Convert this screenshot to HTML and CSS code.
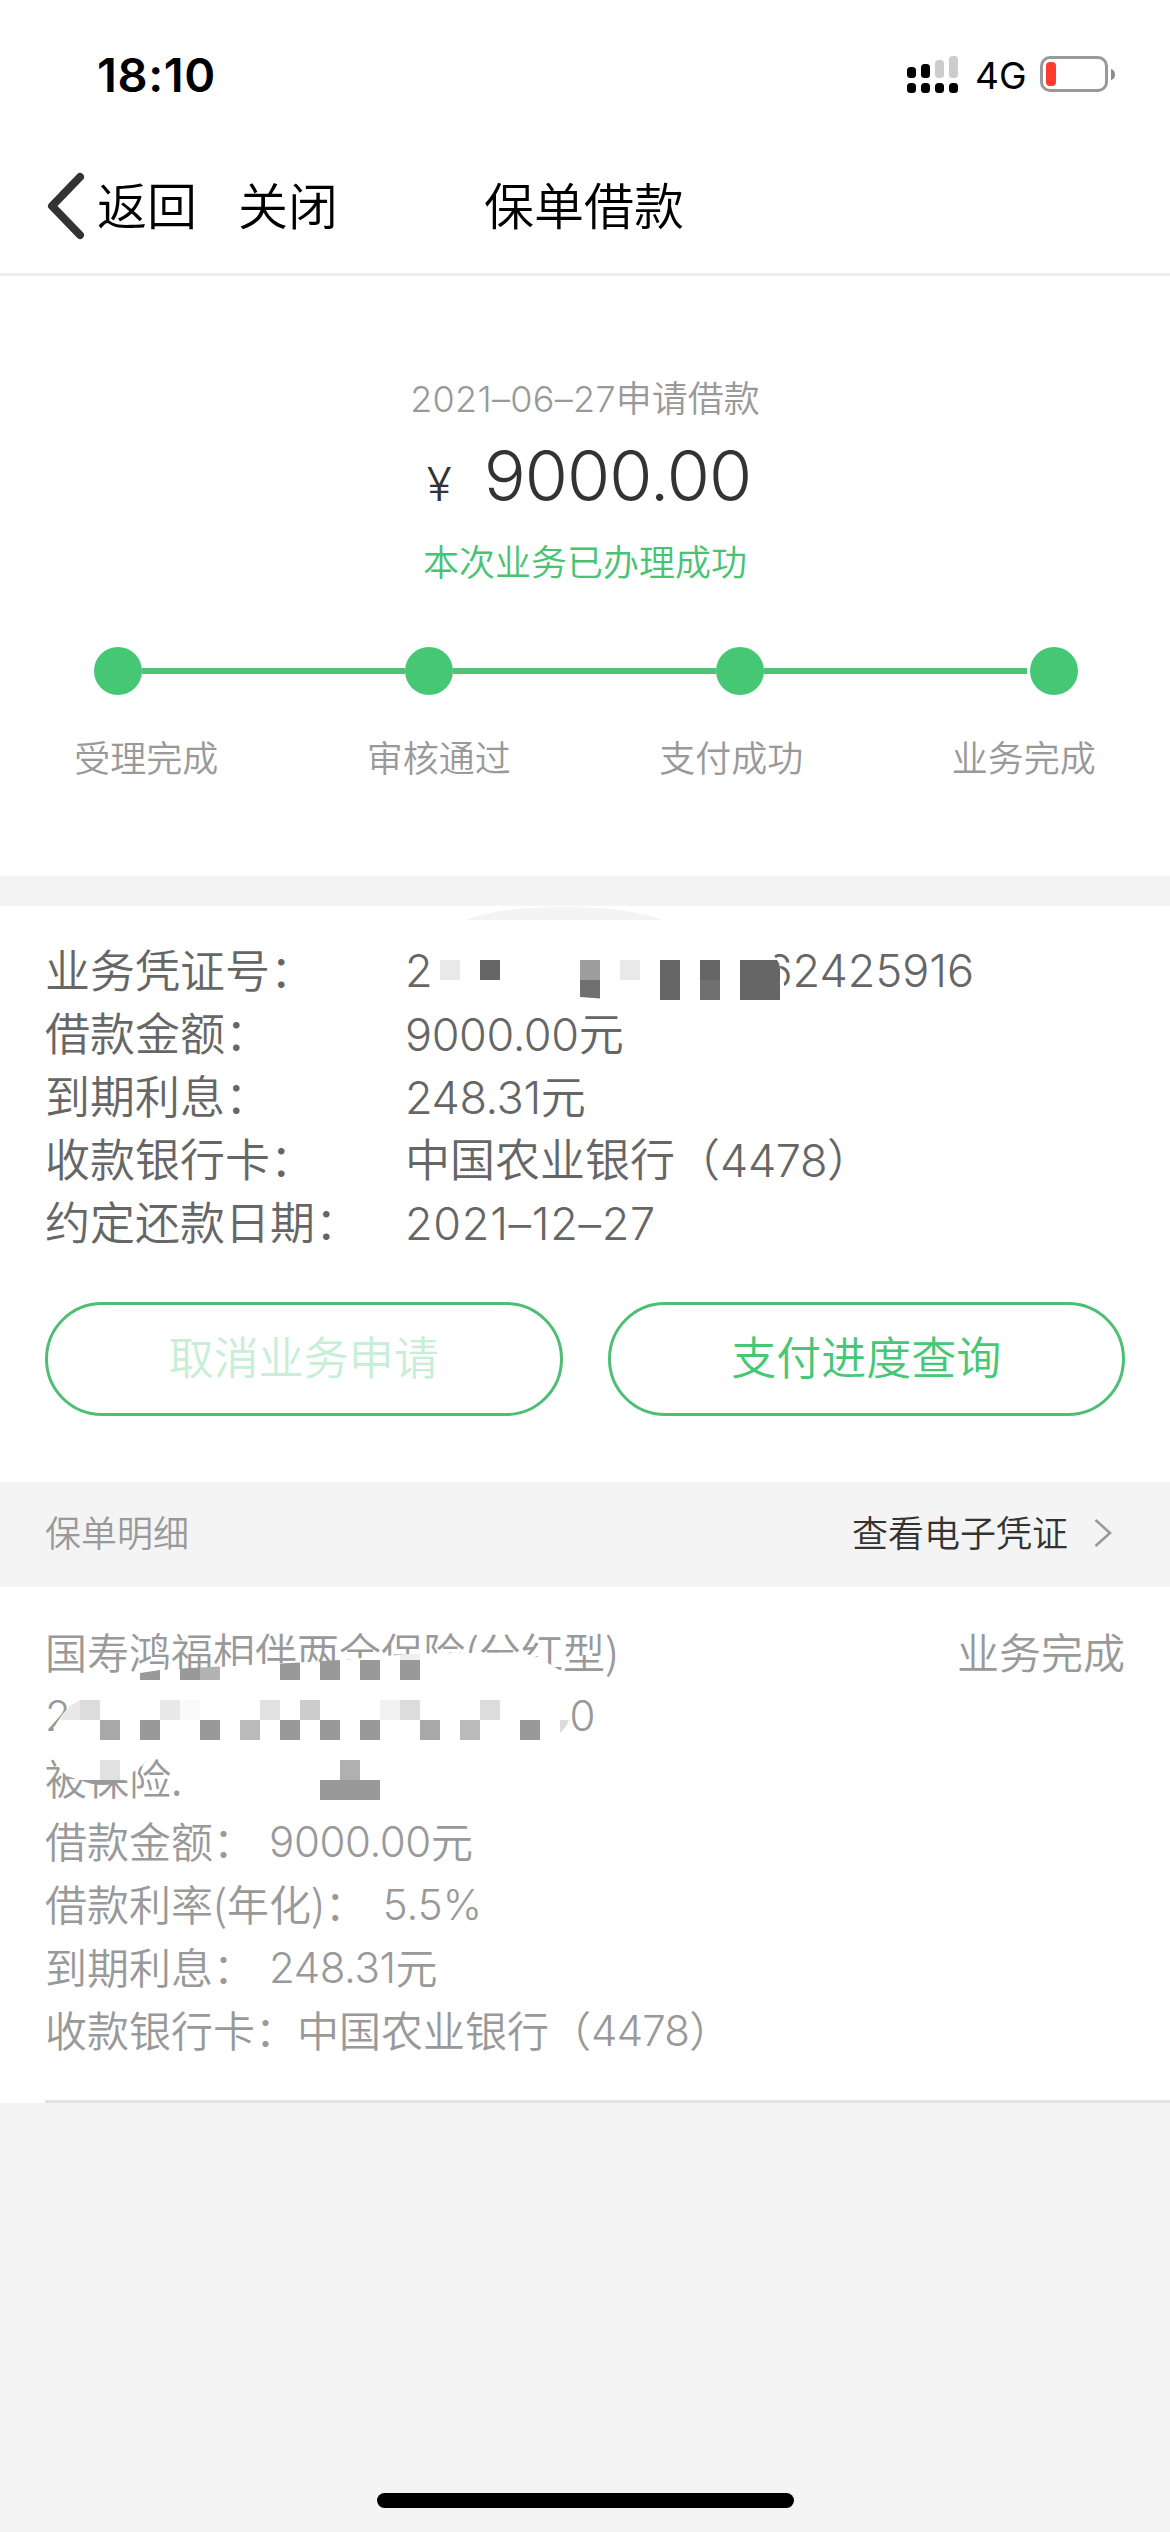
FILE: index.html
```html
<!DOCTYPE html>
<html lang="zh-CN">
<head>
<meta charset="utf-8">
<title>保单借款</title>
<link rel="stylesheet" href="styles.css">
</head>
<body>
<header class="status-bar">
  <span class="time">18:10</span>
  <div class="indicators">
    <svg class="signal" width="52" height="38" viewBox="0 0 52 38">
      <g fill="#000"><rect x="0" y="11" width="9" height="11" rx="3.5"/><rect x="14" y="8" width="9" height="14" rx="3.5"/>
      <rect x="0" y="27" width="9" height="10" rx="3.5"/><rect x="14" y="27" width="9" height="10" rx="3.5"/><rect x="28" y="27" width="9" height="10" rx="3.5"/><rect x="42" y="27" width="9" height="10" rx="3.5"/></g>
      <g fill="#ccc"><rect x="28" y="4" width="9" height="18" rx="3.5"/><rect x="42" y="0" width="9" height="22" rx="3.5"/></g>
    </svg>
    <span class="network">4G</span>
    <svg class="battery" width="76" height="36" viewBox="0 0 76 36">
      <rect x="1.5" y="1.5" width="65" height="33" rx="8.5" fill="none" stroke="#999" stroke-width="3"/>
      <rect x="6" y="6" width="10" height="24" rx="4" fill="#ff3b30"/>
      <path d="M71 13Q75 14 75 18.500Q75 23 71 24Z" fill="#8c8c8c"/>
    </svg>
  </div>
</header>
<nav class="nav-bar">
  <svg class="back-icon" width="38" height="68" viewBox="0 0 38 68"><path d="M33 5L5 34L33 63" fill="none" stroke="#333" stroke-width="8" stroke-linecap="round" stroke-linejoin="round"/></svg>
  <span>返回</span>
  <span class="close">关闭</span>
  <h1>保单借款</h1>
</nav>
<section class="summary">
  <p class="date"><span class="num">2021–06–27</span>申请借款</p>
  <p class="amount"><span class="yen">¥</span><span class="num">9000.00</span></p>
  <p class="result">本次业务已办理成功</p>
  <div class="steps">
    <i class="dot"></i><i class="bar"></i><i class="dot"></i><i class="bar"></i><i class="dot"></i><i class="bar last"></i><i class="dot"></i>
  </div>
  <div class="labels"><span>受理完成</span><span>审核通过</span><span>支付成功</span><span>业务完成</span></div>
</section>
<section class="details">
  <svg class="pull-arc" width="198" height="14" viewBox="0 0 198 14"><path d="M0 14Q28 5 50 3Q99-1 148 3Q175 6 198 14Z" fill="#f4f4f4"/></svg>
  <dl>
    <dt>业务凭证号：</dt><dd class="num voucher"><span>2</span><span>62425916</span></dd>
    <dt>借款金额：</dt><dd><span class="num">9000.00</span>元</dd>
    <dt>到期利息：</dt><dd><span class="num">248.31</span>元</dd>
    <dt>收款银行卡：</dt><dd>中国农业银行（<span class="num">4478</span>）</dd>
    <dt>约定还款日期：</dt><dd><span class="num due">2021–12–27</span></dd>
  </dl>
  <svg class="mask voucher-mask" width="350" height="50" viewBox="435 955 350 50">
    <path d="M435 955H774Q785 972 784 990V1005H435Z" fill="#fff"/>
    <path d="M440 960h20v20h-20zM620 960h20v20h-20z" fill="#e9e9e9"/>
    <path d="M480 960h20v20h-20zM660 960h20v40h-20zM700 960h20v20h-20zM740 960h37Q780 964 780 968V1000H740z" fill="#666"/>
    <path d="M580 960h20v20h-20z" fill="#9e9e9e"/>
    <path d="M580 980h20v18.500l-20-1.500zM700 980h20v20h-20z" fill="#707070"/>
  </svg>
  <div class="actions"><button class="disabled">取消业务申请</button><button>支付进度查询</button></div>
</section>
<div class="section-head">
  <span>保单明细</span>
  <a>查看电子凭证<svg width="20" height="32" viewBox="0 0 20 32"><path d="M1.500 3L16 16L1.500 29" fill="none" stroke="#999" stroke-width="2.500"/></svg></a>
</div>
<section class="policy">
  <div class="row"><span>国寿鸿福相伴两全保险(分红型)</span><span>业务完成</span></div>
  <div class="row number"><span class="num">2</span><span class="num">0</span></div>
  <div class="row">被保险.</div>
  <div class="row">借款金额：<span class="num gap">9000.00</span>元</div>
  <div class="row">借款利率(年化)：<span class="num gap rate">5.5%</span></div>
  <div class="row">到期利息：<span class="num gap">248.31</span>元</div>
  <div class="row">收款银行卡：中国农业银行（<span class="num card">4478</span>）</div>
  <svg class="mask policy-mask" width="560" height="190" viewBox="40 1630 560 190">
    <g fill="#fff">
      <path d="M140 1673L160 1670L220 1667L280 1663L335 1661L370 1657L420 1653.500L465 1653L520 1652.500L538 1657L548 1663L561 1671V1690H140Z"/>
      <path d="M80 1698L70 1706L62 1715L56 1724L52 1734V1738H566L569 1722L570 1706L574 1698Z"/>
      <path d="M55 1755L58 1766Q64 1776 73 1778L80 1780H126L132 1773L143 1765L148 1755Z"/>
    </g>
    <path d="M140 1673L160 1670V1680H140ZM180 1668.500L200 1667.500V1680H180ZM280 1663.500L300 1662.500V1680H280ZM320 1661L340 1660V1680H320ZM360 1660h20v20h-20zM400 1660h20v20h-20z" fill="#999"/>
    <path d="M200 1667.500L220 1666.500V1680H200Z" fill="#b3b3b3"/>
    <path d="M400 1655L420 1653.500V1660H400Z" fill="#eee"/>
    <path d="M80 1700L70 1706L60 1718V1720H80ZM160 1700h20v20h-20z" fill="#e8e8e8"/>
    <path d="M80 1700h20v20h-20zM400 1700h20v20h-20zM480 1700h20v20h-20zM560 1720h9q-3 8-9 13z" fill="#dcdcdc"/>
    <path d="M180 1700h20v20h-20z" fill="#fafafa"/>
    <path d="M260 1700h20v20h-20zM100 1760h20v20h-20z" fill="#e1e1e1"/>
    <path d="M300 1700h20v20h-20z" fill="#ccc"/>
    <path d="M380 1700h20v20h-20z" fill="#f1f1f1"/>
    <path d="M100 1720h20v20h-20zM420 1720h20v20h-20z" fill="#a8a8a8"/>
    <path d="M140 1720h20v20h-20zM200 1720h20v20h-20zM280 1720h20v20h-20zM320 1720h20v20h-20zM360 1720h20v20h-20zM520 1720h20v20h-20zM320 1780h60v20h-60z" fill="#999"/>
    <path d="M240 1720h20v20h-20zM460 1720h20v20h-20z" fill="#bababa"/>
    <path d="M340 1760h20v20h-20z" fill="#b0b0b0"/>
    <path d="M80 1780H126Q102 1790 80 1780Z" fill="#999"/>
  </svg>
</section>
<footer><div class="home-indicator"></div></footer>
</body>
</html>
```
FILE: styles.css
```css
* { box-sizing: border-box; }
body { margin: 0; width: 1170px; height: 2532px; display: flex; flex-direction: column; background: #f4f4f4; color: #999; font: 350 36px/1.4 "Noto Sans CJK SC", sans-serif; }
p, h1, dl, dd { margin: 0; font-weight: inherit; }
.num { font-family: Inter, sans-serif; font-weight: 300; letter-spacing: -.4px; }
.status-bar { height: 132px; background: #fff; color: #000; display: flex; justify-content: space-between; padding: 0 54px 0 97px; font-family: Inter, sans-serif; }
.time { font-size: 47px; font-weight: 600; line-height: 149px; letter-spacing: .6px; }
.indicators { display: flex; align-items: flex-start; padding-top: 56px; }
.network { font-size: 37px; font-weight: 400; line-height: 40px; width: 50px; margin: 0 15px 0 16px; }
.nav-bar { position: relative; height: 144px; background: #fff; border-bottom: 3px solid #eee; display: flex; align-items: center; padding-left: 47px; color: #000; font-size: 50px; line-height: 70px; }
.back-icon { margin: 6px 12px 0 0; }
.close { margin-left: 41px; }
h1 { font-size: 50px; margin-left: 146px; }
.summary { height: 600px; background: #fff; text-align: center; padding-top: 95px; }
.date { line-height: 50px; }
.date .num { letter-spacing: .3px; }
.amount { color: #333; display: flex; justify-content: center; align-items: baseline; font-size: 70px; line-height: 104px; padding-left: 8px; }
.amount .num { letter-spacing: -1px; }
.yen { font-family: Inter, sans-serif; font-weight: 300; font-size: 46px; margin-right: 32px; }
.result { color: #49c274; line-height: 48px; }
.steps { display: flex; align-items: center; padding: 0 92px 0 94px; height: 48px; margin-top: 63px; }
.dot { width: 48px; height: 48px; border-radius: 50%; background: #46c774; flex: none; }
.bar { height: 6px; flex: 1; background: #4fc278; }
.last { margin-right: 3px; }
.labels { display: grid; grid-template-columns: repeat(4, 1fr); margin-top: 36px; line-height: 50px; }
.details { position: relative; height: 576px; margin-top: 30px; background: #fff; padding: 31px 45px 0; color: #666; font-size: 45px; }
.pull-arc { position: absolute; left: 465px; top: 0; }
dl { display: grid; grid-template-columns: 360px 1fr; grid-auto-rows: 63px; line-height: 63px; white-space: nowrap; }
.voucher { display: flex; justify-content: space-between; width: 569px; padding-top: 2px; letter-spacing: 0; }
.due { letter-spacing: .7px; }
.mask { position: absolute; display: block; }
.voucher-mask { left: 435px; top: 49px; }
.actions { display: grid; grid-template-columns: 1fr 1fr; gap: 45px; margin-top: 50px; }
button { height: 114px; border: 3px solid #4dbf75; border-radius: 57px; background: #fff; color: #46c774; font: inherit; line-height: 60px; padding: 0 0 6px; }
.disabled { color: #c8eed5; }
.section-head { height: 105px; display: flex; justify-content: space-between; align-items: center; padding: 0 56px 6px 45px; }
.section-head a { display: flex; align-items: center; color: #333; gap: 26px; }
.section-head svg { margin-top: 4px; }
.policy { position: relative; height: 516px; background: linear-gradient(#e2e2e2, #e2e2e2) 45px 100% / 100% 3px no-repeat #fff; padding: 32px 45px 0; font-size: 42px; line-height: 63px; }
.row { height: 63px; display: flex; white-space: nowrap; }
.row .num { padding-top: 2px; }
.row:first-child { justify-content: space-between; }
.number { justify-content: space-between; width: 550px; }
.gap { margin-left: 14px; }
.rate { margin-left: 16px; letter-spacing: 0; }
.card { letter-spacing: -.8px; }
.policy-mask { left: 40px; top: 43px; }
footer { flex: 1; display: flex; justify-content: center; align-items: flex-end; padding-bottom: 24px; }
.home-indicator { width: 417px; height: 15px; border-radius: 8px; background: #000; }
```
